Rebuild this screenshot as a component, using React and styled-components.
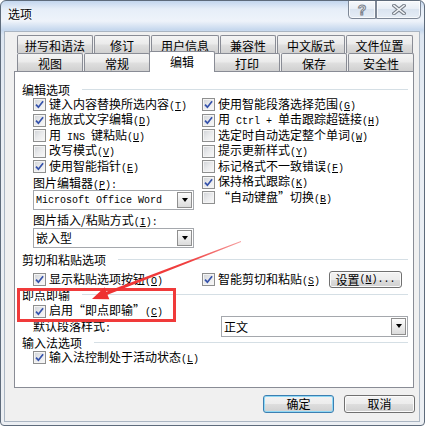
import React from 'react';
import styled, { createGlobalStyle } from 'styled-components';

const GlobalStyle = createGlobalStyle`
	html, body {
		margin: 0;
		padding: 0;
		background: #ffffff;
	}
	body {
		font-family: "Noto Sans CJK SC", "Liberation Sans", sans-serif;
		font-size: 12px;
		color: #000000;
	}
`;

const Window = styled.div`
	position: relative;
	box-sizing: border-box;
	width: 425px;
	height: 426px;
	display: flex;
	flex-direction: column;
	border: 1px solid #5e6b7b;
	border-radius: 6px 6px 4px 4px;
	background: linear-gradient(
		180deg,
		#c3d6ee 0px,
		#e6eef8 8px,
		#eef3fa 20px,
		#c5d7ed 29px,
		#dde6f1 34px,
		#e9eef4 120px,
		#eceff3 100%
	);
	overflow: hidden;
`;

const TitleBar = styled.div`
	flex: none;
	height: 30px;
	display: flex;
	justify-content: space-between;
	align-items: flex-start;
`;

const Title = styled.div`
	padding: 6px 0 0 7px;
	line-height: 14px;
	text-shadow: 0 0 5px #ffffff, 0 0 2px #ffffff;
`;

const CaptionGroup = styled.div`
	display: flex;
	margin: -1px 3px 0 0;
`;

const CaptionButton = styled.div`
	box-sizing: border-box;
	width: ${(props) => props.$width}px;
	height: 19px;
	display: flex;
	align-items: center;
	justify-content: center;
	border: 1px solid #7d8796;
	border-radius: ${(props) => props.$radius};
	background: linear-gradient(180deg, #f6f9fc 0%, #e8eef6 45%, #dae4f0 50%, #e6edf6 100%);
	box-shadow: inset 0 0 0 1px rgba(255, 255, 255, 0.7);
`;

const HelpGlyph = styled.span`
	font-family: "Liberation Sans", sans-serif;
	font-weight: bold;
	font-size: 14px;
	line-height: 14px;
	color: #f3f5f8;
	-webkit-text-stroke: 1px #7b828c;
`;

const Client = styled.div`
	flex: 1;
	display: flex;
	flex-direction: column;
	margin: 0 4px 3px 3px;
	padding: 3px 5px 0 9px;
	background: #f0f0f0;
	border: 1px solid #aab5c2;
`;

const TabStrip = styled.div`
	display: flex;
	flex-direction: column;
	margin-left: 3px;
`;

const TabRow = styled.div`
	display: flex;
	gap: 1px;
	height: 18px;
`;

const Tab = styled.div`
	box-sizing: border-box;
	position: relative;
	flex: ${(props) => (props.$width ? `0 0 ${props.$width}px` : '1 1 0')};
	height: 18px;
	padding-top: 2px;
	border: 1px solid #898c95;
	border-bottom: none;
	border-radius: 2px 2px 0 0;
	background: linear-gradient(180deg, #f4f4f4 0%, #ebebeb 45%, #dedede 55%, #d0d0d0 100%);
	text-align: center;
	line-height: 15px;
	white-space: nowrap;
`;

const ActiveTab = styled(Tab)`
	height: 21px;
	margin: -2px -2px -1px;
	padding-top: 2px;
	background: #ffffff;
	z-index: 1;
`;

const Panel = styled.div`
	flex: 1;
	box-sizing: border-box;
	border: 1px solid #898c95;
	background: #ffffff;
	padding: 10px 5px 0 7px;
`;

const GroupHeader = styled.div`
	display: flex;
	align-items: center;
	height: 15px;
	line-height: 15px;
	margin-top: ${(props) => props.$top || 0}px;
	white-space: nowrap;

	&::after {
		content: '';
		flex: 1;
		height: 1px;
		margin-left: 12px;
		background: #d5dfe5;
	}
`;

const GroupBody = styled.div`
	padding-left: 11px;
	margin-top: ${(props) => props.$top || 0}px;
`;

const OptionGrid = styled.div`
	display: grid;
	grid-template-columns: 169px 1fr;
	align-items: center;
	height: ${(props) => (props.$height ? `${props.$height}px` : 'auto')};
	margin-top: ${(props) => props.$top || 0}px;
`;

const Column = styled.div`
	display: flex;
	flex-direction: column;
	align-self: start;
`;

const Row = styled.div`
	display: flex;
	align-items: center;
	gap: 3px;
	height: ${(props) => props.$height || 15.5}px;
	line-height: 15px;
	white-space: nowrap;
`;

const FieldLabel = styled.div`
	height: 15.5px;
	line-height: 15px;
	margin-top: ${(props) => props.$top || 0}px;
	white-space: nowrap;
`;

const Box = styled.span`
	box-sizing: border-box;
	flex: none;
	width: 13px;
	height: 13px;
	display: flex;
	align-items: center;
	justify-content: center;
	border: 1px solid #8e8f8f;
	background: linear-gradient(135deg, #cfd2d6 0%, #e9eaec 50%, #f9f9f9 100%);
	box-shadow: inset 0 0 0 1px #f4f4f4;
`;

const Mono = styled.span`
	font-family: "Liberation Mono", "DejaVu Sans Mono", monospace;
	font-size: 10px;
	white-space: pre;
`;

const Underlined = styled.span`
	text-decoration: underline;
	text-underline-offset: 1px;
`;

const Quote = styled.span`
	display: inline-block;
	width: 12px;
	text-align: center;
`;

const Combo = styled.div`
	box-sizing: border-box;
	width: ${(props) => props.$width}px;
	height: ${(props) => props.$height || 20}px;
	margin-left: ${(props) => props.$left || 0}px;
	display: flex;
	align-items: stretch;
	padding: 1px 1px 1px 2px;
	border: 1px solid #a5a8ad;
	background: #ffffff;
`;

const ComboText = styled.span`
	flex: 1;
	display: flex;
	align-items: center;
	white-space: pre;
`;

const DropButton = styled.span`
	box-sizing: border-box;
	flex: none;
	width: 15px;
	display: flex;
	align-items: center;
	justify-content: center;
	border: 1px solid #8f8f8f;
	background: linear-gradient(180deg, #fdfdfd 0%, #ececec 50%, #dcdcdc 100%);

	&::before {
		content: '';
		width: 0;
		height: 0;
		border-left: 3.5px solid transparent;
		border-right: 3.5px solid transparent;
		border-top: 4px solid #000000;
	}
`;

const PushButton = styled.button`
	box-sizing: border-box;
	flex: none;
	width: ${(props) => props.$width}px;
	height: ${(props) => props.$height}px;
	margin-left: ${(props) => props.$left || 0}px;
	padding: 0;
	display: flex;
	align-items: center;
	justify-content: center;
	font: inherit;
	line-height: 14px;
	color: #000000;
	border: 1px solid ${(props) => (props.$default ? '#3c7fb1' : '#707070')};
	border-radius: 3px;
	background: linear-gradient(180deg, #f3f3f3 0%, #ececec 50%, #dedede 50%, #d0d0d0 100%);
	box-shadow: inset 0 0 0 1px ${(props) => (props.$default ? '#8fd8f5' : '#fbfbfb')};
`;

const Footer = styled.div`
	display: flex;
	justify-content: flex-end;
	gap: 10px;
	padding: 7px 0 8px;
	margin-right: -1px;
`;

const Highlight = styled.div`
	position: absolute;
	left: 16px;
	top: 287px;
	width: 159px;
	height: 34px;
	box-sizing: border-box;
	border: 3px solid #f03a3a;
	pointer-events: none;
	z-index: 3;
`;

const ArrowLayer = styled.svg`
	position: absolute;
	left: -1px;
	top: -1px;
	width: 430px;
	height: 428px;
	pointer-events: none;
	z-index: 3;
`;

const Key = ({ k, after = '' }) => (
	<Mono>
		(<Underlined>{k}</Underlined>){after}
	</Mono>
);

const CheckMark = () => (
	<svg width='9' height='9' viewBox='0 0 9 9'>
		<path d='M1 4.6 L3.4 7.2 L8.1 1.3' fill='none' stroke='#3552ab' strokeWidth='1.7' />
	</svg>
);

const CheckOption = ({ checked, children, height }) => (
	<Row $height={height}>
		<Box>{checked && <CheckMark />}</Box>
		<span>{children}</span>
	</Row>
);

const ComboBox = ({ width, height, left, children }) => (
	<Combo $width={width} $height={height} $left={left}>
		<ComboText>{children}</ComboText>
		<DropButton />
	</Combo>
);

const backTabs = [
	{ label: '拼写和语法', width: 76 },
	{ label: '修订', width: 56 },
	{ label: '用户信息', width: 68 },
	{ label: '兼容性', width: 56 },
	{ label: '中文版式', width: 68 },
	{ label: '文件位置', width: 67 },
];

const frontTabs = ['视图', '常规', '编辑', '打印', '保存', '安全性'];

const editLeft = [
	{ checked: true, label: <>键入内容替换所选内容<Key k='T' /></> },
	{ checked: true, label: <>拖放式文字编辑<Key k='D' /></> },
	{ checked: false, label: <>用<Mono> INS </Mono>键粘贴<Key k='U' /></> },
	{ checked: false, label: <>改写模式<Key k='V' /></> },
	{ checked: true, label: <>使用智能指针<Key k='E' /></> },
];

const editRight = [
	{ checked: true, label: <>使用智能段落选择范围<Key k='G' /></> },
	{ checked: true, label: <>用<Mono> Ctrl + </Mono>单击跟踪超链接<Key k='H' /></> },
	{ checked: false, label: <>选定时自动选定整个单词<Key k='W' /></> },
	{ checked: false, label: <>提示更新样式<Key k='Y' /></> },
	{ checked: false, label: <>标记格式不一致错误<Key k='F' /></> },
	{ checked: true, label: <>保持格式跟踪<Key k='K' /></> },
	{ checked: false, label: <><Quote>“</Quote>自动键盘<Quote>”</Quote>切换<Key k='B' /></> },
];

const App = () => {
	return (
		<>
			<GlobalStyle />
			<Window>
				<TitleBar>
					<Title>选项</Title>
					<CaptionGroup>
						<CaptionButton $width={28} $radius='0 0 0 4px'>
							<HelpGlyph>?</HelpGlyph>
						</CaptionButton>
						<CaptionButton $width={45} $radius='0 0 4px 0'>
							<svg width='14' height='11' viewBox='0 0 14 11'>
								<path d='M2 1.5 L12 9.5 M12 1.5 L2 9.5' stroke='#7b828c' strokeWidth='3.6' strokeLinecap='square' />
								<path d='M2 1.5 L12 9.5 M12 1.5 L2 9.5' stroke='#f2f5f8' strokeWidth='1.6' strokeLinecap='square' />
							</svg>
						</CaptionButton>
					</CaptionGroup>
				</TitleBar>

				<Client>
					<TabStrip>
						<TabRow>
							{backTabs.map((tab) => (
								<Tab key={tab.label} $width={tab.width}>
									{tab.label}
								</Tab>
							))}
						</TabRow>
						<TabRow>
							{frontTabs.map((label) =>
								label === '编辑' ? (
									<ActiveTab key={label}>{label}</ActiveTab>
								) : (
									<Tab key={label}>{label}</Tab>
								)
							)}
						</TabRow>
					</TabStrip>

					<Panel>
						<GroupHeader>编辑选项</GroupHeader>
						<GroupBody>
							<OptionGrid>
								<Column>
									{editLeft.map((item, i) => (
										<CheckOption key={i} checked={item.checked}>
											{item.label}
										</CheckOption>
									))}
									<FieldLabel>
										图片编辑器<Key k='P' after=':' />
									</FieldLabel>
									<ComboBox width={161}>
										<Mono>Microsoft Office Word</Mono>
									</ComboBox>
									<FieldLabel $top={2}>
										图片插入/粘贴方式<Key k='I' after=':' />
									</FieldLabel>
									<ComboBox width={161}>嵌入型</ComboBox>
								</Column>
								<Column>
									{editRight.map((item, i) => (
										<CheckOption key={i} checked={item.checked}>
											{item.label}
										</CheckOption>
									))}
								</Column>
							</OptionGrid>
						</GroupBody>

						<GroupHeader $top={4.5}>剪切和粘贴选项</GroupHeader>
						<GroupBody $top={4}>
							<OptionGrid>
								<CheckOption checked height={17}>
									显示粘贴选项按钮<Key k='O' />
								</CheckOption>
								<Row $height={17}>
									<Box>
										<CheckMark />
									</Box>
									<span>
										智能剪切和粘贴<Key k='S' />
									</span>
									<PushButton $width={73} $height={17} $left={6}>
										设置<Key k='N' after='...' />
									</PushButton>
								</Row>
							</OptionGrid>
						</GroupBody>

						<GroupHeader $top={-1}>即点即输</GroupHeader>
						<GroupBody $top={1.5}>
							<CheckOption checked>
								启用<Quote>“</Quote>即点即输<Quote>”</Quote>
								<Key k='C' />
							</CheckOption>
							<OptionGrid $top={-3.5} $height={21}>
								<FieldLabel>
									默认段落样式<Mono>:</Mono>
								</FieldLabel>
								<ComboBox width={187} height={21} left={19}>
									正文
								</ComboBox>
							</OptionGrid>
						</GroupBody>

						<GroupHeader $top={-2}>输入法选项</GroupHeader>
						<GroupBody $top={0.5}>
							<CheckOption checked>
								输入法控制处于活动状态<Key k='L' />
							</CheckOption>
						</GroupBody>
					</Panel>

					<Footer>
						<PushButton $width={71} $height={18} $default>
							确定
						</PushButton>
						<PushButton $width={71} $height={18}>
							取消
						</PushButton>
					</Footer>
				</Client>

				<Highlight />
				<ArrowLayer viewBox='0 0 430 428'>
					<defs>
						<linearGradient id='arrowFade' x1='241' y1='241' x2='92' y2='299' gradientUnits='userSpaceOnUse'>
							<stop offset='0' stopColor='#f6a0a0' />
							<stop offset='0.35' stopColor='#f04040' />
							<stop offset='1' stopColor='#ee2f2f' />
						</linearGradient>
					</defs>
					<polygon
						points='240.9,241.1 106.3,291.7 104.6,287.2 92,299 109.3,299.3 107.5,294.7 241.1,241.9'
						fill='url(#arrowFade)'
					/>
				</ArrowLayer>
			</Window>
		</>
	);
};

export default App;
